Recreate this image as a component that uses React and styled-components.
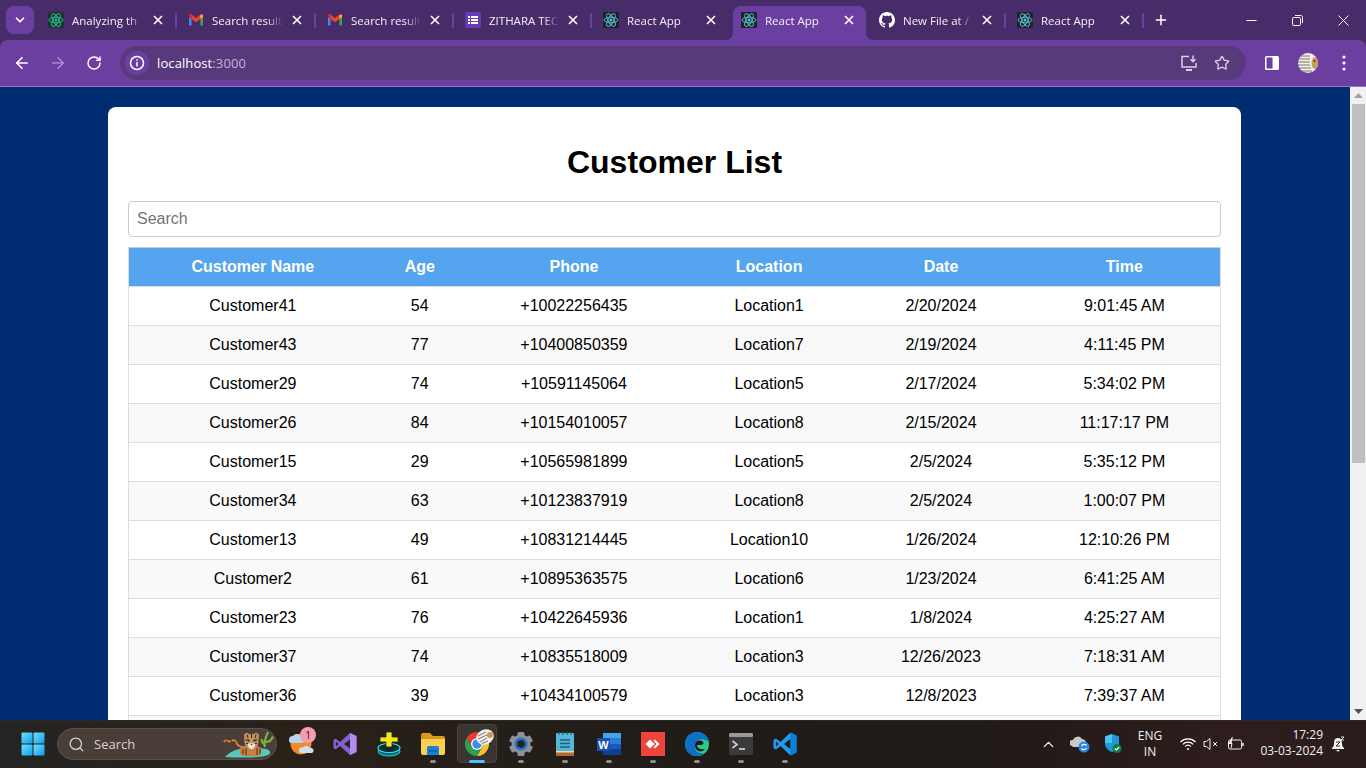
import React from "react";
import styled, { createGlobalStyle } from "styled-components";
import { ArrowLeft, ArrowRight, RotateCw, Star, Plus, ChevronDown, ChevronUp, Search as SearchIcon } from "lucide-react";

const Global = createGlobalStyle`
  html, body { margin: 0; padding: 0; height: 100%; overflow: hidden; background: #002d72; }
  * { box-sizing: border-box; }
`;

const Screen = styled.div`
  width: 1366px; height: 768px; display: flex; flex-direction: column; overflow: hidden;
  font-family: "Open Sans", "Noto Sans", sans-serif;
`;

/* ---------- browser title bar ---------- */
const TitleBar = styled.div`
  height: 40px; flex: none; display: flex; align-items: flex-end; background: #472c69; padding-left: 6px;
`;
const TabSearch = styled.div`
  width: 28px; height: 28px; margin: 0 6px 6px 0; border-radius: 8px; background: #6b3fa0; color: #fff;
  display: flex; align-items: center; justify-content: center;
`;
const TabRow = styled.div`display: flex; align-items: flex-end;`;
const Tab = styled.div`
  position: relative; width: ${p => p.$w || 133}px; height: 34px; margin-right: 5px; padding: 0 11.5px 6px 8px;
  display: flex; align-items: center; gap: 8px; border-radius: 8px 8px 0 0; color: #f3eff8;
  background: ${p => (p.$active ? "#6b3fa0" : "transparent")};
  ${p => !p.$active && !p.$noSep && `
    &::after { content: ""; position: absolute; left: 100%; top: 7px; width: 2px; height: 15px; background: #6b3fa0; }
  `}
  ${p => p.$active && `
    &::before, &::after { content: ""; position: absolute; bottom: 0; width: 8px; height: 8px; }
    &::before { left: -8px; background: radial-gradient(circle at 0 0, transparent 8px, #6b3fa0 8.5px); }
    &::after { right: -8px; background: radial-gradient(circle at 100% 0, transparent 8px, #6b3fa0 8.5px); }
  `}
`;
const Favicon = styled.span`width: 16px; height: 16px; flex: none; display: flex;`;
const TabTitle = styled.span`
  flex: 1; min-width: 0; padding-top: 2px; font-size: 11.5px; line-height: 16px; white-space: nowrap; overflow: hidden;
  -webkit-mask-image: linear-gradient(90deg, #000 78%, transparent 100%);
  mask-image: linear-gradient(90deg, #000 78%, transparent 100%);
`;
const TabClose = styled.span`width: 12px; height: 12px; flex: none; display: flex; color: #fff;`;
const NewTab = styled.div`
  width: 20px; height: 20px; margin: 0 0 10px 4px; color: #fff; display: flex; align-items: center; justify-content: center;
`;
const Spacer = styled.div`flex: 1;`;
const WindowControls = styled.div`display: flex; align-self: stretch;`;
const WinBtn = styled.div`width: 46px; display: flex; align-items: center; justify-content: center; color: #fff;`;

/* ---------- toolbar ---------- */
const Toolbar = styled.div`
  height: 47px; flex: none; display: flex; align-items: flex-start; padding: 6px 4px 0; background: #6b3fa0;
  border-radius: 8px 8px 0 0; border-bottom: 1px solid #9277bb;
`;
const TitleBackdrop = styled.div`background: #472c69; flex: none;`;
const NavBtn = styled.div`
  width: 36px; height: 34px; flex: none; display: flex; align-items: center; justify-content: center;
  color: ${p => (p.$dim ? "#a68cc8" : "#fff")};
`;
const Omnibox = styled.div`
  flex: 1; height: 34px; margin: 0 8px; border-radius: 17px; background: #57397c; display: flex; align-items: center; padding: 0 8px 0 5px;
`;
const InfoBadge = styled.div`
  width: 24px; height: 24px; border-radius: 50%; background: #6b3fa0; display: flex; align-items: center; justify-content: center; flex: none; color: #fff;
`;
const Url = styled.div`flex: 1; margin-left: 8px; font-size: 13px; color: #fff; letter-spacing: 0.1px;`;
const UrlPort = styled.span`color: #c3b4d8;`;
const OmniBtn = styled.div`width: 33px; height: 34px; display: flex; align-items: center; justify-content: center; color: #d9d0e6;`;

/* ---------- page ---------- */
const Viewport = styled.div`flex: 1; min-height: 0; display: flex; overflow: hidden; background: #002d72;`;
const PageArea = styled.div`flex: 1; min-width: 0; overflow: hidden; padding: 20px 0 0 108px;`;
const Card = styled.div`
  width: 1133px; background: #fff; border-radius: 8px; padding: 20px;
  font-family: "Liberation Sans", Arial, sans-serif; color: #000;
`;
const Heading = styled.h1`
  margin: 17px 0 20px; font-size: 32px; line-height: 37px; font-weight: 700; text-align: center;
`;
const SearchBox = styled.input`
  display: block; width: 100%; height: 36px; padding: 0 8px; border: 1px solid #ccc; border-radius: 4px;
  font: 16px "Liberation Sans", Arial, sans-serif; margin-bottom: 10px; outline: none;
  &::placeholder { color: #757575; opacity: 1; }
`;
const Table = styled.table`
  width: 100%; border-collapse: collapse; table-layout: fixed; font-size: 16px; border: 1px solid #ddd; border-top: 1px solid #ccc;
`;
const HeadCell = styled.th`
  height: 39px; padding: 0; text-align: center; font-weight: 700; color: #fff; background: #54a4ef; width: ${p => p.$w}px;
`;
const Row = styled.tr`background: ${p => (p.$alt ? "#f9f9f9" : "#fff")}; border-top: 1px solid #ddd;`;
const Cell = styled.td`height: 39px; padding: 0; text-align: center;`;

const Scrollbar = styled.div`width: 16px; flex: none; background: #f1f1f1; display: flex; flex-direction: column; align-items: stretch;`;
const ScrollArrow = styled.div`height: 17px; flex: none; display: flex; align-items: center; justify-content: center; margin-top: ${p => (p.$end ? "auto" : "0")};`;
const ScrollThumb = styled.div`height: 359px; margin: 0 1px 0 2px; background: #bfbfbf;`;

/* ---------- taskbar ---------- */
const Taskbar = styled.div`
  height: 48px; flex: none; display: flex; align-items: center; color: #fff; padding: 0 0 1px 11px;
  background: linear-gradient(90deg, #232424 0%, #2a2119 20%, #201c18 50%, #201a18 72%, #2e1d1c 90%, #2a1c1c 100%);
  border-top: 1px solid #2c2824;
  font-family: "Open Sans", "Noto Sans", sans-serif;
`;
const Slot = styled.div`
  position: relative; width: 44px; height: 44px; flex: none; display: flex; align-items: center; justify-content: center;
  ${p => p.$active && `
    &::before { content: ""; position: absolute; inset: 2px 2px 3px; border-radius: 4px; background: #3a3531; border: 1px solid #47423e; }
  `}
  & > svg { position: relative; }
  ${p => p.$dot && `
    &::after { content: ""; position: absolute; bottom: 3px; left: 50%; transform: translateX(-50%); height: 3px; border-radius: 2px;
      width: ${p.$active ? 16 : 6}px; background: ${p.$active ? "#4cc2ff" : "#8f8b88"}; }
  `}
`;
const SearchPill = styled.div`
  position: relative; width: 220px; height: 32px; margin: 0 2px 0 2px; border-radius: 16px; background: #4a3f38; border: 1px solid #5c5249;
  display: flex; align-items: center; padding-left: 10px; gap: 9px; font-size: 13px; color: #d8d3cf; flex: none;
`;
const PillArt = styled.span`position: absolute; right: 1px; top: 2px; display: flex;`;
const Badge = styled.span`
  position: absolute; top: 5px; right: 7px; width: 16px; height: 16px; border-radius: 50%; background: #f49db0; color: #222;
  font-size: 10px; line-height: 16px; text-align: center;
`;
const Tray = styled.div`margin-left: auto; display: flex; align-items: center; height: 100%;`;
const TrayIcon = styled.div`
  width: ${p => p.$w}px; display: flex; align-items: center; justify-content: center; flex: none; color: #fff;
`;
const Lang = styled.div`width: 50px; text-align: center; font-size: 12px; line-height: 16px; color: #f0f0f0; flex: none;`;
const Clock = styled.div`width: 72px; text-align: right; font-size: 12px; line-height: 16px; color: #f0f0f0; flex: none; padding-bottom: 2px;`;
const TrayEnd = styled.span`width: 13px; flex: none;`;

/* ---------- icons ---------- */
const ReactIcon = ({ color = "#58c4dc", bg = "#20232a" }) => (
  <svg width="16" height="16" viewBox="0 0 16 16">
    <rect width="16" height="16" rx="1" fill={bg} />
    <g fill="none" stroke={color} strokeWidth="0.9">
      <ellipse cx="8" cy="8" rx="7" ry="2.8" />
      <ellipse cx="8" cy="8" rx="7" ry="2.8" transform="rotate(60 8 8)" />
      <ellipse cx="8" cy="8" rx="7" ry="2.8" transform="rotate(120 8 8)" />
    </g>
    <circle cx="8" cy="8" r="1.5" fill={color} />
  </svg>
);
const Gmail = () => (
  <svg width="16" height="16" viewBox="0 0 16 16">
    <path d="M1 3.5V13.5H3.6V6.6Z" fill="#4285f4" />
    <path d="M15 3.5V13.5H12.4V6.6Z" fill="#34a853" />
    <path d="M1 3.4C1 2 2.6 1.6 3.5 2.4L8 6 12.5 2.4C13.4 1.6 15 2 15 3.4L15 5 12.4 7 8 10.2 3.6 7 1 5Z" fill="#ea4335" />
    <path d="M12.4 3.3L15 2.8V5L12.4 7Z" fill="#fbbc04" />
    <path d="M1 2.8L3.6 3.3V7L1 5Z" fill="#c5221f" />
  </svg>
);
const Forms = () => (
  <svg width="16" height="16" viewBox="0 0 16 16">
    <rect width="16" height="16" rx="2" fill="#673ab7" />
    <g fill="#fff">
      <rect x="3" y="4" width="2" height="2" /><rect x="6" y="4" width="7" height="2" />
      <rect x="3" y="7" width="2" height="2" /><rect x="6" y="7" width="7" height="2" />
      <rect x="3" y="10" width="2" height="2" /><rect x="6" y="10" width="7" height="2" />
    </g>
  </svg>
);
const Github = () => (
  <svg width="16" height="16" viewBox="0 0 16 16" fill="#fff">
    <path d="M8 0C3.58 0 0 3.58 0 8c0 3.54 2.29 6.53 5.47 7.59.4.07.55-.17.55-.38 0-.19-.01-.82-.01-1.49-2.01.37-2.53-.49-2.69-.94-.09-.23-.48-.94-.82-1.13-.28-.15-.68-.52-.01-.53.63-.01 1.08.58 1.23.82.72 1.21 1.87.87 2.33.66.07-.52.28-.87.51-1.07-1.78-.2-3.64-.89-3.64-3.95 0-.87.31-1.59.82-2.15-.08-.2-.36-1.02.08-2.12 0 0 .67-.21 2.2.82.64-.18 1.32-.27 2-.27s1.36.09 2 .27c1.53-1.04 2.2-.82 2.2-.82.44 1.1.16 1.92.08 2.12.51.56.82 1.27.82 2.15 0 3.07-1.87 3.75-3.65 3.95.29.25.54.73.54 1.48 0 1.07-.01 1.93-.01 2.2 0 .21.15.46.55.38A8.01 8.01 0 0 0 16 8c0-4.42-3.58-8-8-8z" />
  </svg>
);
const CloseX = () => (
  <svg width="12" height="12" viewBox="0 0 12 12" stroke="currentColor" strokeWidth="1.6"><path d="M2 2L10 10M10 2L2 10" /></svg>
);
const Info = () => (
  <svg width="16" height="16" viewBox="0 0 16 16" fill="none" stroke="#fff" strokeWidth="1.5">
    <circle cx="8" cy="8" r="6.5" /><path d="M8 7V11.5" /><path d="M8 4.2V5.8" />
  </svg>
);
const InstallIcon = () => (
  <svg width="18" height="18" viewBox="0 0 18 18" fill="none" stroke="currentColor" strokeWidth="1.5">
    <path d="M9 2.5H2V13H16V9" /><path d="M6 16H12" strokeWidth="2" /><path d="M13 1.5V7.5M10.5 5.2L13 7.7 15.5 5.2" />
  </svg>
);
const SidePanel = () => (
  <svg width="16" height="16" viewBox="0 0 16 16">
    <rect x="1" y="1" width="14" height="14" rx="1.5" fill="#fff" />
    <rect x="2.5" y="2.5" width="6" height="11" fill="#6b3fa0" />
  </svg>
);
const Avatar = () => (
  <svg width="20" height="20" viewBox="0 0 20 20">
    <clipPath id="avclip"><circle cx="10" cy="10" r="10" /></clipPath>
    <g clipPath="url(#avclip)">
      <rect width="20" height="20" fill="#f4f1ec" />
      <g stroke="#55504a" strokeWidth="0.8">
        <path d="M3 3H12M1 6H12M0 9H12M0 12H12M1 15H13M4 18H14" />
      </g>
      <ellipse cx="17" cy="10" rx="3.500" ry="6" fill="#c89a5e" />
      <circle cx="16.500" cy="8" r="1" fill="#5a3b20" />
    </g>
  </svg>
);
const Dots = () => (
  <svg width="4" height="16" viewBox="0 0 4 16" fill="#fff">
    <circle cx="2" cy="2" r="1.6" /><circle cx="2" cy="8" r="1.6" /><circle cx="2" cy="14" r="1.6" />
  </svg>
);
const Minimize = () => (
  <svg width="11" height="11" viewBox="0 0 11 11" stroke="currentColor" strokeWidth="1"><path d="M0.5 5.5H10.500" /></svg>
);
const Restore = () => (
  <svg width="11" height="11" viewBox="0 0 11 11" fill="none" stroke="currentColor" strokeWidth="1">
    <rect x="0.5" y="2.5" width="8" height="8" rx="1.2" /><path d="M3 0.5H8.8C9.8 0.5 10.5 1.2 10.5 2.2V8" />
  </svg>
);
const WinClose = () => (
  <svg width="11" height="11" viewBox="0 0 11 11" stroke="currentColor" strokeWidth="1"><path d="M0.5 0.5L10.5 10.5M10.5 0.5L0.5 10.5" /></svg>
);
const WinLogo = () => (
  <svg width="24" height="24" viewBox="0 0 24 24">
    <defs><linearGradient id="wl" x1="0" y1="0" x2="1" y2="1"><stop offset="0" stopColor="#6fe2f7" /><stop offset="1" stopColor="#0f9bf0" /></linearGradient></defs>
    <g fill="url(#wl)">
      <rect x="0.5" y="0.5" width="11" height="11" rx="1" /><rect x="12.5" y="0.5" width="11" height="11" rx="1" />
      <rect x="0.5" y="12.5" width="11" height="11" rx="1" /><rect x="12.5" y="12.5" width="11" height="11" rx="1" />
    </g>
  </svg>
);
const Tiger = () => (
  <svg width="52" height="27" viewBox="0 0 52 27">
    <path d="M2 26C7 20 16 17 26 17 38 17 46 17 47 21 48 25 38 26.500 24 26.500 14 26.500 6 26.500 2 26Z" fill="#55c8bd" />
    <path d="M1 11C3 7 5 12 8 10 11 8 13 10 14 13 16 16 18 16 21 16" fill="none" stroke="#d2803a" strokeWidth="2" />
    <path d="M3 9.500L4 12M8 8.500L8.500 11.500M12.500 10.500L11 12.500" stroke="#4a2c14" strokeWidth="0.800" />
    <path d="M17 17C20 14 34 14 38 17 39 20 38 24 36 25H20C17 24 16 20 17 17Z" fill="#c97d3f" />
    <path d="M20 18V23M23 17V24M34 17V24M37 18V23" stroke="#4a2c14" strokeWidth="1" />
    <path d="M21 3.500L24 1.500 26 3H31L33 1.500 36 3.500 35.500 11C35 17 31 19 28.500 19 26 19 22 17 21.500 11Z" fill="#c2905f" />
    <path d="M24 3.500L25 7M28.500 3V7M33 3.500L32 7M22.500 9H25M32 9H34.500M23 12.500H25M32 12.500H34" stroke="#3f2a18" strokeWidth="1" />
    <circle cx="25.500" cy="9.500" r="1" fill="#1a1a1a" /><circle cx="31.500" cy="9.500" r="1" fill="#1a1a1a" />
    <path d="M25 13C26 12 31 12 32 13 32.500 16 30 18 28.500 18 27 18 24.500 16 25 13Z" fill="#efe6d6" />
    <path d="M27.500 13H29.500L28.500 14.500Z" fill="#3a2418" />
    <path d="M42 16C40.500 10 43 6 45 1M43 11C46 11 48.500 9 50 5.500M42.500 14C40.500 13 39 11 38.500 8" stroke="#7fb13a" strokeWidth="2.200" fill="none" />
  </svg>
);
const Weather = () => (
  <svg width="26" height="24" viewBox="0 0 26 24">
    <circle cx="13" cy="12" r="10.500" fill="#f08a24" />
    <path d="M1 8A3.500 3.500 0 0 1 5 4 4.500 4.500 0 0 1 13 5 3 3 0 0 1 14 11H3A2.600 2.600 0 0 1 1 8Z" fill="#b9d4ee" />
    <path d="M11 19A3 3 0 0 1 15 15.500 4 4 0 0 1 22 16 2.700 2.700 0 0 1 24 21H13A2 2 0 0 1 11 19Z" fill="#cfe0f3" />
  </svg>
);
const VS = () => (
  <svg width="24" height="24" viewBox="0 0 24 24">
    <path d="M17 1L23.500 4V20L17 23 7 14 2.500 17.500 .5 16V8L2.500 6.500 7 10Z" fill="#8261d0" />
    <path d="M17 1L23.500 4V20L17 23Z" fill="#b18cf0" />
    <path d="M17 7.500L11 12 17 16.500Z" fill="#2a2119" />
    <path d="M3 9.500V14.500L5.500 12Z" fill="#2a2119" />
  </svg>
);
const YellowApp = () => (
  <svg width="24" height="26" viewBox="0 0 24 26">
    <ellipse cx="12" cy="20.500" rx="11" ry="4.500" fill="#0f6b78" stroke="#22d3e0" strokeWidth="1" />
    <ellipse cx="12" cy="17" rx="11" ry="4.500" fill="#0c2a32" stroke="#27e3ee" strokeWidth="1.200" />
    <path d="M9 1H15V6H21V11H15V16H9V11H3V6H9Z" fill="#f5e51b" stroke="#222" strokeWidth="0.800" />
  </svg>
);
const Folder = () => (
  <svg width="24" height="22" viewBox="0 0 24 22">
    <path d="M0 2A2 2 0 0 1 2 0H9L12 3H22A2 2 0 0 1 24 5V10H0Z" fill="#d99a1c" />
    <path d="M0 6H24V20A2 2 0 0 1 22 22H2A2 2 0 0 1 0 20Z" fill="#fbd04e" />
    <path d="M6 15A2 2 0 0 1 8 13H16A2 2 0 0 1 18 15V22H6Z" fill="#1683d8" />
    <rect x="8" y="17" width="8" height="2" fill="#0c5ea8" />
  </svg>
);
const Chrome = () => (
  <svg width="36" height="36" viewBox="0 0 36 36">
    <g transform="translate(6 6)">
      <path d="M12 0A12 12 0 0 1 22.400 6H12A6 6 0 0 0 6.800 15L1.600 6A12 12 0 0 1 12 0Z" fill="#e33b2e" />
      <path d="M22.400 6A12 12 0 0 1 12 24L17.200 15A6 6 0 0 0 12 6Z" fill="#fbc02d" />
      <path d="M12 24A12 12 0 0 1 1.600 6L6.800 15A6 6 0 0 0 17.200 15Z" fill="#2e9e4f" />
      <circle cx="12" cy="12" r="6" fill="#fff" />
      <circle cx="12" cy="12" r="4.700" fill="#3f8cf0" />
    </g>
    <g>
      <ellipse cx="26" cy="11" rx="9" ry="7.500" fill="#f2efe9" transform="rotate(-25 26 11)" />
      <path d="M19 10L27 6M19 13L28 9M21 16L28 12M23 17.500L29 15" stroke="#555" strokeWidth="0.800" />
      <circle cx="31" cy="9" r="3" fill="#c89a5e" />
    </g>
  </svg>
);
const Gear = () => (
  <svg width="24" height="24" viewBox="0 0 24 24">
    <g fill="#8a929c">
      <circle cx="12" cy="12" r="9.500" />
      {[0, 60, 120, 180, 240, 300].map(a => (
        <rect key={a} x="8.500" y="0" width="7" height="6" rx="1.500" transform={`rotate(${a} 12 12)`} />
      ))}
    </g>
    <circle cx="12" cy="12" r="6.500" fill="#2a6fc0" />
    <circle cx="12" cy="12" r="3.800" fill="#26221e" />
  </svg>
);
const Notepad = () => (
  <svg width="20" height="25" viewBox="0 0 20 25">
    <rect x="1" y="1" width="18" height="23" rx="1" fill="#56b8d8" />
    <rect x="1" y="20" width="18" height="4" fill="#b26a2c" />
    <rect x="1" y="19" width="18" height="1.500" fill="#f2d9a8" />
    <path d="M4 0V3M8 0V3M12 0V3M16 0V3" stroke="#1c5f80" strokeWidth="1.200" />
    <path d="M5 8H15M5 11.500H15M5 15H15" stroke="#1c5f80" strokeWidth="1.500" />
  </svg>
);
const Word = () => (
  <svg width="24" height="22" viewBox="0 0 24 22">
    <rect x="6" y="0" width="18" height="6" fill="#41a5ee" />
    <rect x="6" y="5" width="18" height="6" fill="#2b7cd3" />
    <rect x="6" y="11" width="18" height="6" fill="#185abd" />
    <rect x="6" y="16" width="18" height="6" fill="#103f91" />
    <rect x="0" y="5" width="13" height="13" rx="1" fill="#1a4fb0" />
    <text x="6.500" y="15.500" fontSize="11" fontWeight="700" fill="#fff" textAnchor="middle" fontFamily="Liberation Sans, sans-serif">W</text>
  </svg>
);
const AnyDesk = () => (
  <svg width="24" height="24" viewBox="0 0 24 24">
    <rect width="24" height="24" fill="#ef443b" />
    <path d="M9 7.500L13.500 12 9 16.500 4.500 12Z" fill="#fff" />
    <path d="M14 7.500L18.500 12 14 16.500 12.500 15 15.500 12 12.500 9Z" fill="#fff" />
  </svg>
);
const Edge = () => (
  <svg width="24" height="24" viewBox="0 0 24 24">
    <defs>
      <linearGradient id="eg" x1="0" y1="0" x2="1" y2="1"><stop offset="0" stopColor="#1fb6d8" /><stop offset="1" stopColor="#2fd36a" /></linearGradient>
    </defs>
    <circle cx="12" cy="12" r="12" fill="url(#eg)" />
    <path d="M0 12C0 5 6 0 12 0 18 0 23 4 24 10 20 6 12 6 10 12 8.500 18 13 22 19 21.500 16.500 23.300 14 24 12 24 5 24 0 19 0 12Z" fill="#0f6fc6" />
    <path d="M10 13C10 9 14 7.500 17 9 19 10 19 13 16 13H12C12 16 15 18 20 17 17 21 10 20 10 13Z" fill="#1c1a18" />
  </svg>
);
const Terminal = () => (
  <svg width="24" height="22" viewBox="0 0 24 22">
    <rect width="24" height="22" rx="2" fill="#3a3a3a" />
    <rect width="24" height="4" rx="1.500" fill="#9a9a9a" />
    <path d="M3.500 8L8 11.500 3.500 15" fill="none" stroke="#d0d0d0" strokeWidth="1.600" />
    <path d="M10 16H16" stroke="#e8e8e8" strokeWidth="1.500" />
  </svg>
);
const VSCode = () => (
  <svg width="24" height="24" viewBox="0 0 24 24">
    <path d="M17.500 0.500L23.500 3.400V20.600L17.500 23.500 7.500 14 3 17.500 0.500 16.300V7.700L3 6.500 7.500 10ZM17.500 6.800L11 12 17.500 17.200ZM3 9.300V14.700L5.600 12Z" fill="#1f9cf0" fillRule="evenodd" />
    <path d="M17.500 0.500L23.500 3.400V20.600L17.500 23.500V17.200 6.800Z" fill="#0a7fd6" />
  </svg>
);
const OneDrive = () => (
  <svg width="20" height="18" viewBox="0 0 20 18">
    <path d="M2 11A3 3 0 0 1 3 5 5 5 0 0 1 12 4 4 4 0 0 1 16 9V12H3Z" fill="#c9c9c9" />
    <circle cx="14" cy="12" r="5.500" fill="#2a86e0" />
    <path d="M11.500 11A3 3 0 0 1 16.500 10.500M16.500 13A3 3 0 0 1 11.500 13.500" stroke="#fff" strokeWidth="1.200" fill="none" />
  </svg>
);
const Shield = () => (
  <svg width="18" height="20" viewBox="0 0 18 20">
    <path d="M8 0L15 2.500V9C15 14 12 16.500 8 18 4 16.500 1 14 1 9V2.500Z" fill="#1e9bd7" />
    <path d="M8 0V9H1V2.500Z" fill="#4cc3f0" />
    <circle cx="13" cy="14.500" r="4.500" fill="#107c41" />
    <path d="M10.800 14.500L12.500 16 15.200 13" stroke="#fff" strokeWidth="1.200" fill="none" />
  </svg>
);
const Wifi = () => (
  <svg width="16" height="14" viewBox="0 0 16 14" fill="none" stroke="#fff" strokeWidth="1.100">
    <path d="M.5 5A10.500 10.500 0 0 1 15.500 5" /><path d="M2.800 7.300A7.300 7.300 0 0 1 13.200 7.300" /><path d="M5 9.500A4 4 0 0 1 11 9.500" />
    <circle cx="8" cy="12" r="1" fill="#fff" stroke="none" />
  </svg>
);
const Muted = () => (
  <svg width="16" height="14" viewBox="0 0 16 14" fill="none" stroke="#f0f0f0" strokeWidth="1">
    <path d="M1 4.500H3.500L7 1.500V12.500L3.500 9.500H1Z" /><path d="M10 5L14 9M14 5L10 9" />
  </svg>
);
const Battery = () => (
  <svg width="18" height="14" viewBox="0 0 18 14" fill="none" stroke="#f0f0f0" strokeWidth="1">
    <rect x="1.500" y="3" width="13" height="9" rx="1.500" /><path d="M16 6V9" strokeWidth="1.500" />
    <path d="M5.500 0L2 6.500H5L4 11" fill="#f0f0f0" />
  </svg>
);
const Bell = () => (
  <svg width="14" height="16" viewBox="0 0 14 16">
    <path d="M7 2C3.500 2 3 5 3 8 3 10 2 11 1 12V13H13V12C12 11 11 10 11 8 11 5 10.500 2 7 2Z" fill="#f4f4f4" />
    <path d="M5.500 14A1.500 1.500 0 0 0 8.500 14Z" fill="#f4f4f4" />
    <path d="M5 6H9L5 10H9" stroke="#333" strokeWidth="1" fill="none" />
    <path d="M10 1H13L10 4H13" stroke="#f4f4f4" strokeWidth="0.900" fill="none" />
  </svg>
);

/* ---------- data ---------- */
const tabs = [
  { title: "Analyzing th", icon: <ReactIcon color="#27c290" bg="#1e3330" />, w: 135 },
  { title: "Search result", icon: <Gmail />, w: 134 },
  { title: "Search result", icon: <Gmail /> },
  { title: "ZITHARA TEC", icon: <Forms /> },
  { title: "React App", icon: <ReactIcon />, noSep: true },
  { title: "React App", icon: <ReactIcon />, active: true },
  { title: "New File at /", icon: <Github /> },
  { title: "React App", icon: <ReactIcon /> },
];

const columns = [
  ["Customer Name", 248], ["Age", 86], ["Phone", 222], ["Location", 168], ["Date", 175.5], ["Time", 191.5],
];

const customers = [
  ["Customer41", 54, "+10022256435", "Location1", "2/20/2024", "9:01:45 AM"],
  ["Customer43", 77, "+10400850359", "Location7", "2/19/2024", "4:11:45 PM"],
  ["Customer29", 74, "+10591145064", "Location5", "2/17/2024", "5:34:02 PM"],
  ["Customer26", 84, "+10154010057", "Location8", "2/15/2024", "11:17:17 PM"],
  ["Customer15", 29, "+10565981899", "Location5", "2/5/2024", "5:35:12 PM"],
  ["Customer34", 63, "+10123837919", "Location8", "2/5/2024", "1:00:07 PM"],
  ["Customer13", 49, "+10831214445", "Location10", "1/26/2024", "12:10:26 PM"],
  ["Customer2", 61, "+10895363575", "Location6", "1/23/2024", "6:41:25 AM"],
  ["Customer23", 76, "+10422645936", "Location1", "1/8/2024", "4:25:27 AM"],
  ["Customer37", 74, "+10835518009", "Location3", "12/26/2023", "7:18:31 AM"],
  ["Customer36", 39, "+10434100579", "Location3", "12/8/2023", "7:39:37 AM"],
  ["", "", "", "", "", ""],
];

const apps = [
  [<VS key="vs" />, false], [<YellowApp key="y" />, false], [<Folder key="f" />, true], [<Chrome key="c" />, true, true],
  [<Gear key="g" />, true], [<Notepad key="n" />, true], [<Word key="w" />, true], [<AnyDesk key="a" />, true],
  [<Edge key="e" />, true], [<Terminal key="t" />, true], [<VSCode key="v" />, true],
];

export default function App() {
  return (
    <Screen>
      <Global />
      <TitleBar>
        <TabSearch><ChevronDown size={14} strokeWidth={3} /></TabSearch>
        <TabRow>
          {tabs.map((t, i) => (
            <Tab key={i} $w={t.w} $active={t.active} $noSep={t.noSep}>
              <Favicon>{t.icon}</Favicon>
              <TabTitle>{t.title}</TabTitle>
              <TabClose><CloseX /></TabClose>
            </Tab>
          ))}
        </TabRow>
        <NewTab><Plus size={16} strokeWidth={2.2} /></NewTab>
        <Spacer />
        <WindowControls>
          <WinBtn><Minimize /></WinBtn>
          <WinBtn><Restore /></WinBtn>
          <WinBtn><WinClose /></WinBtn>
        </WindowControls>
      </TitleBar>
      <TitleBackdrop>
        <Toolbar>
          <NavBtn><ArrowLeft size={18} strokeWidth={2.2} /></NavBtn>
          <NavBtn $dim><ArrowRight size={18} strokeWidth={2.2} /></NavBtn>
          <NavBtn><RotateCw size={16} strokeWidth={2.2} /></NavBtn>
          <Omnibox>
            <InfoBadge><Info /></InfoBadge>
            <Url>localhost<UrlPort>:3000</UrlPort></Url>
            <OmniBtn><InstallIcon /></OmniBtn>
            <OmniBtn><Star size={16} strokeWidth={2} /></OmniBtn>
          </Omnibox>
          <NavBtn><SidePanel /></NavBtn>
          <NavBtn><Avatar /></NavBtn>
          <NavBtn><Dots /></NavBtn>
        </Toolbar>
      </TitleBackdrop>
      <Viewport>
        <PageArea>
          <Card>
            <Heading>Customer List</Heading>
            <SearchBox placeholder="Search" />
            <Table>
              <thead>
                <tr>{columns.map(([name, w]) => <HeadCell key={name} $w={w}>{name}</HeadCell>)}</tr>
              </thead>
              <tbody>
                {customers.map((row, i) => (
                  <Row key={i} $alt={i % 2 === 1}>
                    {row.map((v, j) => <Cell key={j}>{v}</Cell>)}
                  </Row>
                ))}
              </tbody>
            </Table>
          </Card>
        </PageArea>
        <Scrollbar>
          <ScrollArrow>
            <svg width="9" height="5" viewBox="0 0 9 5"><path d="M0 5L4.500 0 9 5Z" fill="#a3a3a3" /></svg>
          </ScrollArrow>
          <ScrollThumb />
          <ScrollArrow $end>
            <svg width="9" height="5" viewBox="0 0 9 5"><path d="M0 0L4.500 5 9 0Z" fill="#505050" /></svg>
          </ScrollArrow>
        </Scrollbar>
      </Viewport>
      <Taskbar>
        <Slot><WinLogo /></Slot>
        <SearchPill>
          <SearchIcon size={17} strokeWidth={1.8} />
          <span>Search</span>
          <PillArt><Tiger /></PillArt>
        </SearchPill>
        <Slot><Weather /><Badge>1</Badge></Slot>
        {apps.map(([icon, dot, active], i) => (
          <Slot key={i} $dot={dot} $active={active}>{icon}</Slot>
        ))}
        <Tray>
          <TrayIcon $w={22}><ChevronUp size={17} strokeWidth={1.8} /></TrayIcon>
          <TrayIcon $w={42}><OneDrive /></TrayIcon>
          <TrayIcon $w={24}><Shield /></TrayIcon>
          <Lang>ENG<br />IN</Lang>
          <TrayIcon $w={26}><Wifi /></TrayIcon>
          <TrayIcon $w={20}><Muted /></TrayIcon>
          <TrayIcon $w={30}><Battery /></TrayIcon>
          <Clock>17:29<br />03-03-2024</Clock>
          <TrayIcon $w={30}><Bell /></TrayIcon>
          <TrayEnd />
        </Tray>
      </Taskbar>
    </Screen>
  );
}
